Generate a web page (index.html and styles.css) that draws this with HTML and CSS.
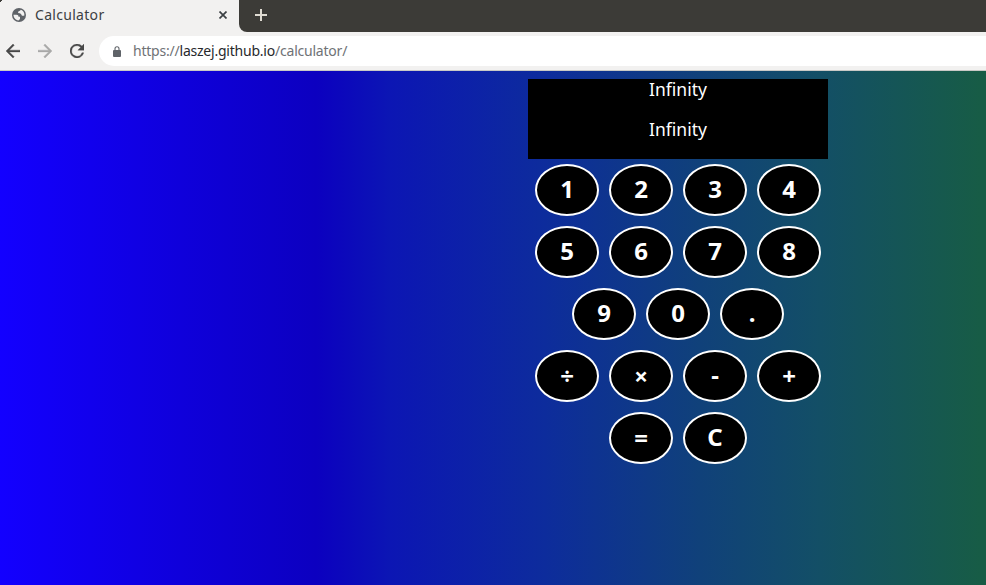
FILE: index.html
```html
<!DOCTYPE html>
<html lang="en">
<head>
<meta charset="utf-8">
<title>Calculator</title>
<link rel="stylesheet" href="styles.css">
</head>
<body>
<header class="browser">
  <div class="tabs">
    <div class="tab">
      <svg class="globe" viewBox="0 0 14 14" width="14" height="14"><circle cx="7" cy="7" r="7" fill="#5f6368"/><path d="M1.500 6.800H4.500C6 6.800 6.500 7.700 6.500 8.800H8V11L6.500 12.500C3.500 12.200 1.500 9.800 1.500 6.800z" fill="#f2f1f0"/><path d="M8.800 1.800C8.500 3.300 6 2.800 6 4.300S9 5 9.300 6.500 11 7.800 12.400 7.400C12.700 4.700 11 2.500 8.800 1.800z" fill="#f2f1f0"/></svg>
      <span class="title">Calculator</span>
      <svg class="close" viewBox="0 0 8 8" width="8" height="8"><path d="M.5.5l7 7m0-7l-7 7" stroke="#3c4043" stroke-width="1.700"/></svg>
    </div>
    <div class="strip">
      <svg class="plus" viewBox="0 0 12 12" width="12" height="12"><path d="M6 0v12M0 6h12" stroke="#dfdbd2" stroke-width="2"/></svg>
    </div>
  </div>
  <div class="toolbar">
    <svg class="nav" viewBox="4 4 16 16" width="14" height="14"><path d="M20 11H7.830l5.590-5.590L12 4l-8 8 8 8 1.410-1.410L7.830 13H20z" fill="#484848" stroke="#484848" stroke-width=".4"/></svg>
    <svg class="nav" viewBox="4 4 16 16" width="14" height="14"><path d="M4 11h12.170l-5.590-5.590L12 4l8 8-8 8-1.410-1.410L16.170 13H4z" fill="#a9a9a8" stroke="#a9a9a8" stroke-width=".4"/></svg>
    <svg class="nav" viewBox="4 4 16 16" width="14" height="14"><path d="M17.650 6.350A8 8 0 1 0 19.730 14h-2.080A6 6 0 1 1 12 6c1.660 0 3.140.69 4.220 1.780L13 11h7V4z" fill="#484848" stroke="#484848" stroke-width=".4"/></svg>
    <div class="address">
      <svg class="lock" viewBox="0 0 8 11" width="8" height="11"><path d="M2 4V2.700a2 2 0 0 1 4 0V4" fill="none" stroke="#5f6368" stroke-width="1.100"/><rect y="4" width="8" height="7" rx="1" fill="#5f6368"/></svg>
      <span class="url">https://<b>laszej.github.io</b>/calculator/</span>
    </div>
  </div>
</header>
<main class="page">
  <section class="calculator">
    <div class="display"><div>Infinity</div><div>Infinity</div></div>
    <div class="keys">
      <button>1</button><button>2</button><button>3</button><button>4</button>
      <button>5</button><button>6</button><button>7</button><button>8</button>
    </div>
    <div class="keys"><button>9</button><button>0</button><button>.</button></div>
    <div class="keys"><button class="op">÷</button><button class="op">×</button><button>-</button><button class="op">+</button></div>
    <div class="keys"><button class="op">=</button><button>C</button></div>
  </section>
</main>
</body>
</html>
```
FILE: styles.css
```css
* { box-sizing: border-box; }
body {
  margin: 0;
  height: 100vh;
  overflow: hidden;
  display: flex;
  flex-direction: column;
  font-family: "Noto Sans", "Open Sans", sans-serif;
}
svg { display: block; flex: none; }
.browser { flex: none; height: 71px; background: #f2f1f0; border-bottom: 1px solid #c9c9c6; }
.tabs { display: flex; height: 32px; background: linear-gradient(135deg, #3c3b37 1.500px, #f2f1f0 2px); }
.tab {
  display: flex;
  align-items: center;
  width: 239px;
  height: 30px;
  padding: 0 12px;
}
.title { flex: 1; margin-left: 9px; font-size: 14px; line-height: 20px; color: #3c4043; letter-spacing: 0.300px; }
.strip { flex: 1; background: #3c3b37; border-bottom-left-radius: 8px; padding: 9px 16px; }
.toolbar { display: flex; align-items: center; height: 38px; padding-left: 6px; }
.nav { margin-right: 18px; }
.address {
  flex: 1;
  display: flex;
  align-items: center;
  height: 30px;
  margin-left: -3px;
  padding-left: 14px;
  background: #fff;
  border-radius: 15px 0 0 15px;
}
.url { margin-left: 12px; font-size: 14px; line-height: 20px; color: #6f7276; white-space: nowrap; letter-spacing: -0.220px; }
.url b { font-weight: 400; color: #27292c; }
.page {
  flex: 1;
  padding: 8px 0 0 528px;
  background: linear-gradient(to right, #1300ff 0, #0c00c0 316px, #0c16b4 390px, #0d2c9c 545px, #10417a 700px, #134f66 820px, #175c46 980px);
}
.calculator { width: 300px; }
.display {
  height: 80px;
  margin-bottom: 5px;
  background: #000;
  color: #fff;
  font-size: 17.500px;
  line-height: 20px;
  text-align: center;
}
.display div { height: 40px; }
.keys { display: flex; flex-wrap: wrap; justify-content: center; gap: 10px; margin-bottom: 10px; }
.keys button {
  width: 64px;
  height: 52px;
  padding: 0 0 2px;
  border: 2px solid #fff;
  border-radius: 50%;
  background: #000;
  color: #fff;
  font: 700 24px/46px "Noto Sans", "Open Sans", sans-serif;
}
.keys .op { padding: 0; }
```
